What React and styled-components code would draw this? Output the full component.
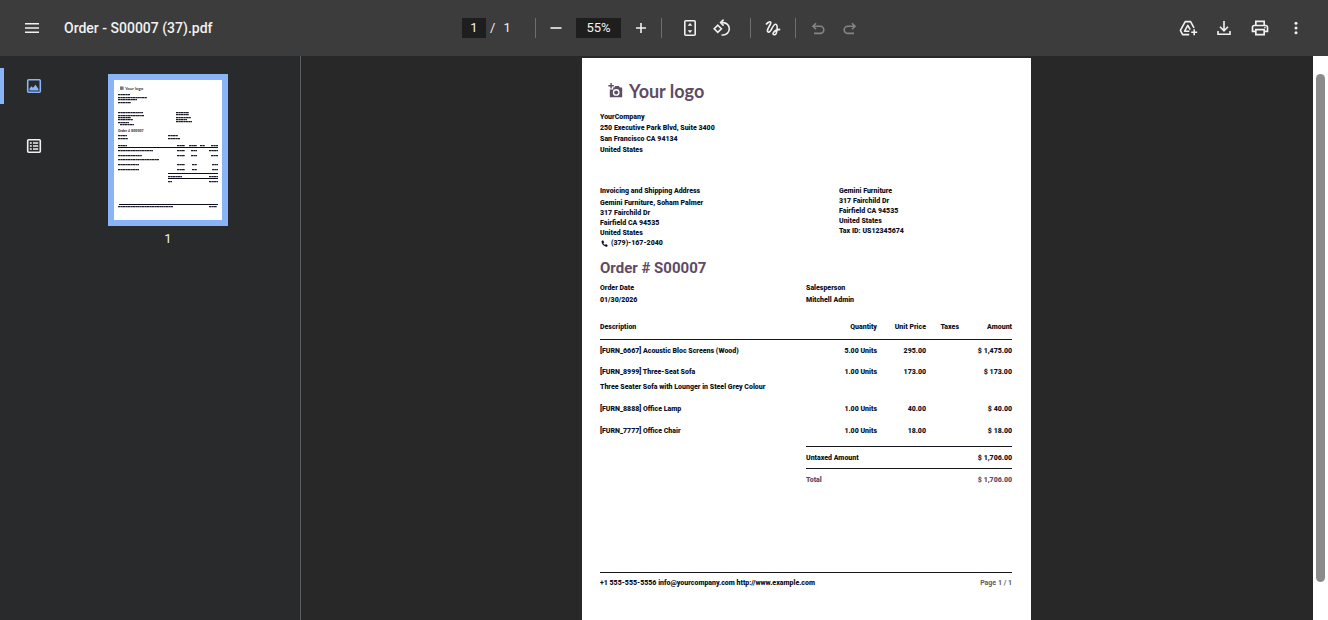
import React from 'react';
import styled, { createGlobalStyle } from 'styled-components';
import { MdOutlinePrint } from 'react-icons/md';

const GlobalStyle = createGlobalStyle`
    * {
        box-sizing: border-box;
    }

    body {
        margin: 0;
        background: #282828;
        font-family: Roboto, sans-serif;
    }
`;

const Viewer = styled.div`
    display: flex;
    flex-direction: column;
    height: 100vh;
    overflow: hidden;
`;

const Toolbar = styled.header`
    display: grid;
    grid-template-columns: 1fr auto 1fr;
    align-items: center;
    flex: none;
    height: 56px;
    padding: 0 16px;
    background: #3c3c3c;
    color: #f1f1f1;
`;

const ToolGroup = styled.div`
    display: flex;
    align-items: center;
    gap: ${props => props.$gap || 0}px;
    justify-content: ${props => props.$end ? 'flex-end' : 'flex-start'};
`;

const IconButton = styled.button`
    display: flex;
    align-items: center;
    justify-content: center;
    width: 32px;
    height: 32px;
    padding: 0;
    border: 0;
    background: none;
    color: inherit;

    &:disabled {
        color: #858585;
    }
`;

const FileName = styled.h1`
    margin: 0 0 0 16px;
    font-size: 14px;
    font-weight: 500;
    line-height: 20px;
    white-space: nowrap;
`;

const ToolInput = styled.input`
    width: ${props => props.$wide ? 45 : 24}px;
    height: 20px;
    margin: 0 ${props => props.$wide ? 4 : 0}px;
    padding: 0;
    border: 0;
    background: #1e1e1e;
    color: inherit;
    font: 13px/20px Roboto, sans-serif;
    text-align: center;
`;

const PageCount = styled.span`
    display: flex;
    gap: 8px;
    width: 32px;
    padding-left: 4px;
    font-size: 13px;
    line-height: 20px;
`;

const Separator = styled.span`
    width: 1px;
    height: 20px;
    margin: 0 ${props => props.$after || 4}px 0 ${props => props.$before || 4}px;
    background: #6e6e6e;
`;

const Body = styled.div`
    display: flex;
    flex: 1;
    min-height: 0;
`;

const Sidebar = styled.aside`
    display: flex;
    flex: none;
    width: 301px;
    border-right: 1px solid #5c5c5c;
    background: #282a2b;
    color: #f1f1f1;
`;

const SideTabs = styled.nav`
    display: flex;
    flex-direction: column;
    gap: 24px;
    width: 68px;
    padding-top: 12px;
`;

const SideTab = styled.button`
    display: flex;
    align-items: center;
    justify-content: center;
    width: 68px;
    height: 36px;
    padding: 0;
    border: 0;
    background: ${props => props.$active ? 'linear-gradient(#8ab4f8, #8ab4f8) left / 4px 100% no-repeat' : 'none'};
    color: ${props => props.$active ? '#8ab4f8' : '#f1f1f1'};
`;

const Thumbnails = styled.div`
    display: flex;
    flex-direction: column;
    align-items: center;
    width: 200px;
    padding-top: 18px;
    font-size: 13px;
    line-height: 26px;
`;

const Thumbnail = styled.button`
    display: block;
    padding: 0;
    border: 6px solid #8ab4f8;
    background: #fff;

    & svg {
        display: block;
    }
`;

const Pages = styled.main`
    flex: 1;
    min-width: 0;
    overflow: hidden;
    padding: 2px 1px 0 0;
`;

const ScrollTrack = styled.div`
    flex: none;
    width: 15px;
    padding: 18px 3px 38px;
    background: #fff;
`;

const ScrollThumb = styled.div`
    height: 100%;
    border-radius: 5px;
    background: #8b8b8b;
`;

const Sheet = styled.article`
    display: flex;
    flex-direction: column;
    width: 449px;
    max-width: 100%;
    height: 635px;
    margin: 0 auto;
    padding: 21px 19px 0 18px;
    background: #fff;
    color: #0d1226;
    font-family: Roboto, sans-serif;
    font-size: 7px;
    font-weight: 900;
    line-height: 10px;
`;

const Logo = styled.div`
    display: flex;
    align-items: center;
    gap: 5px;
    height: 24px;
    margin: 0 0 9px 8px;
    color: #5e4b66;
    font-family: Lato, sans-serif;
    font-size: 18px;
    font-weight: 700;
`;

const Address = styled.address`
    font-style: normal;
    line-height: ${props => props.$line || 10}px;

    & strong {
        display: block;
        margin-bottom: ${props => props.$space || 0}px;
        font-weight: inherit;
    }
`;

const Columns = styled.div`
    display: grid;
    grid-template-columns: ${props => props.$split} 1fr;
    margin-top: ${props => props.$top}px;
`;

const Phone = styled.div`
    display: flex;
    align-items: center;
    gap: 3px;
    padding-left: 1px;
`;

const OrderTitle = styled.h2`
    margin: 10px 0 0;
    color: #5e4b66;
    font-size: 15px;
    font-weight: 700;
    line-height: 20px;
`;

const Lines = styled.table`
    width: 100%;
    margin-top: 17px;
    border-collapse: collapse;
    table-layout: fixed;

    & th, & td {
        padding: 0;
        font-weight: inherit;
        text-align: right;
        vertical-align: top;
        white-space: nowrap;
    }

    & th:first-child, & td:first-child {
        text-align: left;
    }

    & th {
        height: 17px;
        border-bottom: 1px solid #16161f;
    }

    & tbody td {
        height: 22px;
        padding-top: 6px;
    }
`;

const Note = styled.div`
    margin: 5px 0 6px;
    line-height: 10px;
`;

const Totals = styled.dl`
    width: 50%;
    margin: 4px 0 0 auto;
`;

const TotalRow = styled.div`
    display: flex;
    justify-content: space-between;
    height: 22px;
    padding-top: 6px;
    border-top: 1px solid #16161f;
    color: ${props => props.$final ? '#5e4b66' : 'inherit'};

    & dd {
        margin: 0;
    }
`;

const SheetFooter = styled.footer`
    display: flex;
    justify-content: space-between;
    margin: auto 0 105px;
    padding: 5px 0 0;
    border-top: 1px solid #16161f;
    line-height: 10px;
`;

const PageLabel = styled.span`
    color: #5b5b66;
    font-weight: 700;
`;

const orderLines = [
    { name: '[FURN_6667] Acoustic Bloc Screens (Wood)', qty: '5.00 Units', price: '295.00', amount: '$ 1,475.00' },
    { name: '[FURN_8999] Three-Seat Sofa', note: 'Three Seater Sofa with Lounger in Steel Grey Colour', qty: '1.00 Units', price: '173.00', amount: '$ 173.00' },
    { name: '[FURN_8888] Office Lamp', qty: '1.00 Units', price: '40.00', amount: '$ 40.00' },
    { name: '[FURN_7777] Office Chair', qty: '1.00 Units', price: '18.00', amount: '$ 18.00' },
];

// x, y, width of every text run on the small page
const thumbRuns = [
    [4, 14, 12], [4, 17, 29], [4, 19, 19], [4, 22, 13],
    [4, 32, 25], [4, 35, 26], [4, 37, 13], [4, 39, 15], [4, 42, 11], [6, 44, 14],
    [62, 32, 13], [62, 34, 13], [62, 37, 15], [62, 39, 11], [62, 41, 16],
    [4, 55, 9], [4, 58, 10], [54, 55, 10], [54, 58, 12],
    [4, 65, 9], [63, 65, 8], [75, 65, 8], [86, 65, 5], [97, 65, 7],
    [4, 70, 35], [63, 70, 8], [77, 70, 6], [95, 70, 9],
    [4, 75, 24], [63, 75, 8], [77, 75, 6], [97, 75, 7], [4, 79, 41],
    [4, 84, 21], [63, 84, 8], [78, 84, 5], [98, 84, 6],
    [4, 89, 21], [63, 89, 8], [78, 89, 5], [98, 89, 6],
    [54, 96, 14], [95, 96, 9], [54, 101, 4], [95, 101, 9],
    [4, 126, 55], [95, 126, 8],
];

function Icon(props) {
    return (
        <svg width="20" height="20" viewBox="0 0 20 20" fill="none" stroke="currentColor" strokeWidth="1.6" aria-hidden="true">
            {props.children}
        </svg>
    );
}

function PageThumbnail() {
    return (
        <svg width="108" height="140" viewBox="0 0 108 140" aria-hidden="true">
            <path d="M6 6.5h3.6v3.4H6z" fill="#777" />
            <text x="11" y="9.8" fontFamily="Lato, sans-serif" fontSize="4.4" fontWeight="700" fill="#333">Your logo</text>
            {thumbRuns.map(([x, y, w]) => (
                <path key={`${x}-${y}`} d={`M${x} ${y + 0.6}h${w}`} stroke="#1c1c2c" strokeWidth="1.3" strokeDasharray="2.6 .3 1.7 .2" />
            ))}
            <text x="4" y="52" fontFamily="Roboto, sans-serif" fontSize="3.6" fontWeight="900" fill="#4d3b55">Order # S00007</text>
            <path d="M4 67.5h100M54 93.5h50M54 98.5h50M5 124.5h99" stroke="#0d0d1c" />
        </svg>
    );
}

function ViewerToolbar() {
    return (
        <Toolbar>
            <ToolGroup>
                <IconButton aria-label="Menu">
                    <Icon><path d="M3 5.8h14M3 10h14M3 14.2h14" /></Icon>
                </IconButton>
                <FileName>Order - S00007 (37).pdf</FileName>
            </ToolGroup>

            <ToolGroup>
                <ToolInput aria-label="Page number" defaultValue="1" />
                <PageCount>
                    <span>/</span>
                    <span>1</span>
                </PageCount>
                <Separator $before={17} />
                <IconButton aria-label="Zoom out">
                    <Icon><path d="M4.5 10h11" /></Icon>
                </IconButton>
                <ToolInput $wide aria-label="Zoom level" defaultValue="55%" />
                <IconButton aria-label="Zoom in">
                    <Icon><path d="M5 10h10M10 5v10" /></Icon>
                </IconButton>
                <Separator $after={12} />
                <IconButton aria-label="Fit to page">
                    <Icon>
                        <rect x="4.8" y="2.8" width="10.4" height="14.4" rx="1" />
                        <path d="M10 5l2.4 2.8H7.6zM10 15l2.4-2.8H7.6z" fill="currentColor" stroke="none" />
                    </Icon>
                </IconButton>
                <IconButton aria-label="Rotate counterclockwise">
                    <Icon>
                        <path d="M5.8 7.2l3.6 3.6-3.6 3.6-3.6-3.6z" />
                        <path d="M9.5 4.6h1.6a6.2 6.2 0 0 1 0 12.4H9.5" />
                        <path d="M11.6 1.6L8.6 4.6l3 3" />
                    </Icon>
                </IconButton>
                <Separator $before={12} $after={6} />
                <IconButton aria-label="Draw">
                    <Icon>
                        <path d="M3 6.6C4.5 4.6 6.8 3 7.7 4.2 8.8 6 4 10.2 4.4 13c.3 1.8 2.3 1.4 3.4-.6C9 10.3 10.8 6 12.6 6.2c2.6.3 1.7 10.6-1.2 10.6-3.2 0-.6-5.2 5.8-5.4" />
                    </Icon>
                </IconButton>
                <Separator $before={6} $after={6} />
                <IconButton aria-label="Undo" disabled>
                    <Icon><path d="M8 5.2L5 8.2l3 3M5 8.2h7.2a3.6 3.6 0 0 1 0 7.2H6" /></Icon>
                </IconButton>
                <IconButton aria-label="Redo" disabled>
                    <Icon><path d="M12 5.2l3 3-3 3M15 8.2H7.8a3.6 3.6 0 0 0 0 7.2H14" /></Icon>
                </IconButton>
            </ToolGroup>

            <ToolGroup $end $gap={4}>
                <IconButton aria-label="Save to Drive">
                    <Icon>
                        <path d="M11.2 16.6H4.6L2.4 12.4 7.2 3.6h5.4l3.4 6.2M11.4 13.2H6.6L9.8 7.4l2.4 4.2M16.2 11.2v6M13.2 14.2h6" strokeLinejoin="round" />
                    </Icon>
                </IconButton>
                <IconButton aria-label="Download">
                    <Icon><path d="M10 3v9.5M6 8.8l4 4 4-4M4 13v3.2h12V13" /></Icon>
                </IconButton>
                <IconButton aria-label="Print"><MdOutlinePrint size={20} /></IconButton>
                <IconButton aria-label="More actions">
                    <Icon>
                        <g fill="currentColor" stroke="none">
                            <circle cx="10" cy="5.2" r="1.5" />
                            <circle cx="10" cy="10" r="1.5" />
                            <circle cx="10" cy="14.8" r="1.5" />
                        </g>
                    </Icon>
                </IconButton>
            </ToolGroup>
        </Toolbar>
    );
}

function OrderSheet() {
    return (
        <Sheet>
            <Logo>
                <svg width="16" height="16" viewBox="0 0 16 16" fill="currentColor" aria-hidden="true">
                    <path fillRule="evenodd" d="M2.4 0h1.4v2h2v1.4h-2v2H2.4v-2h-2V2h2zM5.2 4.5h1.2l.8-1.6h3.6l1 1.6h2.4v9.7H1.8V6.6h3.4zM8.2 6a3.4 3.4 0 1 0 0 6.8A3.4 3.4 0 0 0 8.2 6z" />
                    <circle cx="8.2" cy="9.4" r="2" />
                </svg>
                Your logo
            </Logo>

            <Address $line={11}>
                YourCompany<br />
                250 Executive Park Blvd, Suite 3400<br />
                San Francisco CA 94134<br />
                United States
            </Address>

            <Columns $split="239px" $top={30}>
                <Address $space={2}>
                    <strong>Invoicing and Shipping Address</strong>
                    Gemini Furniture, Soham Palmer<br />
                    317 Fairchild Dr<br />
                    Fairfield CA 94535<br />
                    United States
                    <Phone>
                        <svg width="7" height="7" viewBox="0 0 24 24" fill="currentColor" aria-hidden="true">
                            <path d="M2 3l5-2 4 7-3 3c1 3 3 5 6 6l3-3 6 4-2 5C11 23 1 14 2 3z" />
                        </svg>
                        (379)-167-2040
                    </Phone>
                </Address>
                <Address>
                    <strong>Gemini Furniture</strong>
                    317 Fairchild Dr<br />
                    Fairfield CA 94535<br />
                    United States<br />
                    Tax ID: US12345674
                </Address>
            </Columns>

            <OrderTitle>Order # S00007</OrderTitle>

            <Columns $split="50%" $top={5}>
                <Address $space={2}>
                    <strong>Order Date</strong>
                    01/30/2026
                </Address>
                <Address $space={2}>
                    <strong>Salesperson</strong>
                    Mitchell Admin
                </Address>
            </Columns>

            <Lines>
                <colgroup>
                    <col />
                    <col width="49" />
                    <col width="49" />
                    <col width="33" />
                    <col width="53" />
                </colgroup>
                <thead>
                    <tr>
                        <th>Description</th>
                        <th>Quantity</th>
                        <th>Unit Price</th>
                        <th>Taxes</th>
                        <th>Amount</th>
                    </tr>
                </thead>
                <tbody>
                    {orderLines.map(line => (
                        <tr key={line.name}>
                            <td>
                                {line.name}
                                {line.note && <Note>{line.note}</Note>}
                            </td>
                            <td>{line.qty}</td>
                            <td>{line.price}</td>
                            <td />
                            <td>{line.amount}</td>
                        </tr>
                    ))}
                </tbody>
            </Lines>

            <Totals>
                <TotalRow>
                    <dt>Untaxed Amount</dt>
                    <dd>$ 1,706.00</dd>
                </TotalRow>
                <TotalRow $final>
                    <dt>Total</dt>
                    <dd>$ 1,706.00</dd>
                </TotalRow>
            </Totals>

            <SheetFooter>
                <span>+1 555-555-5556 info@yourcompany.com http://www.example.com</span>
                <PageLabel>Page 1 / 1</PageLabel>
            </SheetFooter>
        </Sheet>
    );
}

export default function App() {
    return (
        <Viewer>
            <GlobalStyle />
            <ViewerToolbar />
            <Body>
                <Sidebar>
                    <SideTabs>
                        <SideTab $active aria-label="Thumbnails">
                            <Icon>
                                <rect x="3.7" y="3.7" width="12.6" height="12.6" rx="1" />
                                <path d="M5.5 14.5v-2l2-2.2 1.5 1.5 2.5-3 3 4.2v1.5z" fill="currentColor" stroke="none" />
                            </Icon>
                        </SideTab>
                        <SideTab aria-label="Document outline">
                            <Icon>
                                <rect x="3.7" y="3.7" width="12.6" height="12.6" rx="1" />
                                <path d="M5.8 7h2M9 7h5.2M5.8 10h2M9 10h5.2M5.8 13h2M9 13h5.2" />
                            </Icon>
                        </SideTab>
                    </SideTabs>
                    <Thumbnails>
                        <Thumbnail aria-label="Page 1"><PageThumbnail /></Thumbnail>
                        <span>1</span>
                    </Thumbnails>
                </Sidebar>
                <Pages>
                    <OrderSheet />
                </Pages>
                <ScrollTrack>
                    <ScrollThumb />
                </ScrollTrack>
            </Body>
        </Viewer>
    );
}
